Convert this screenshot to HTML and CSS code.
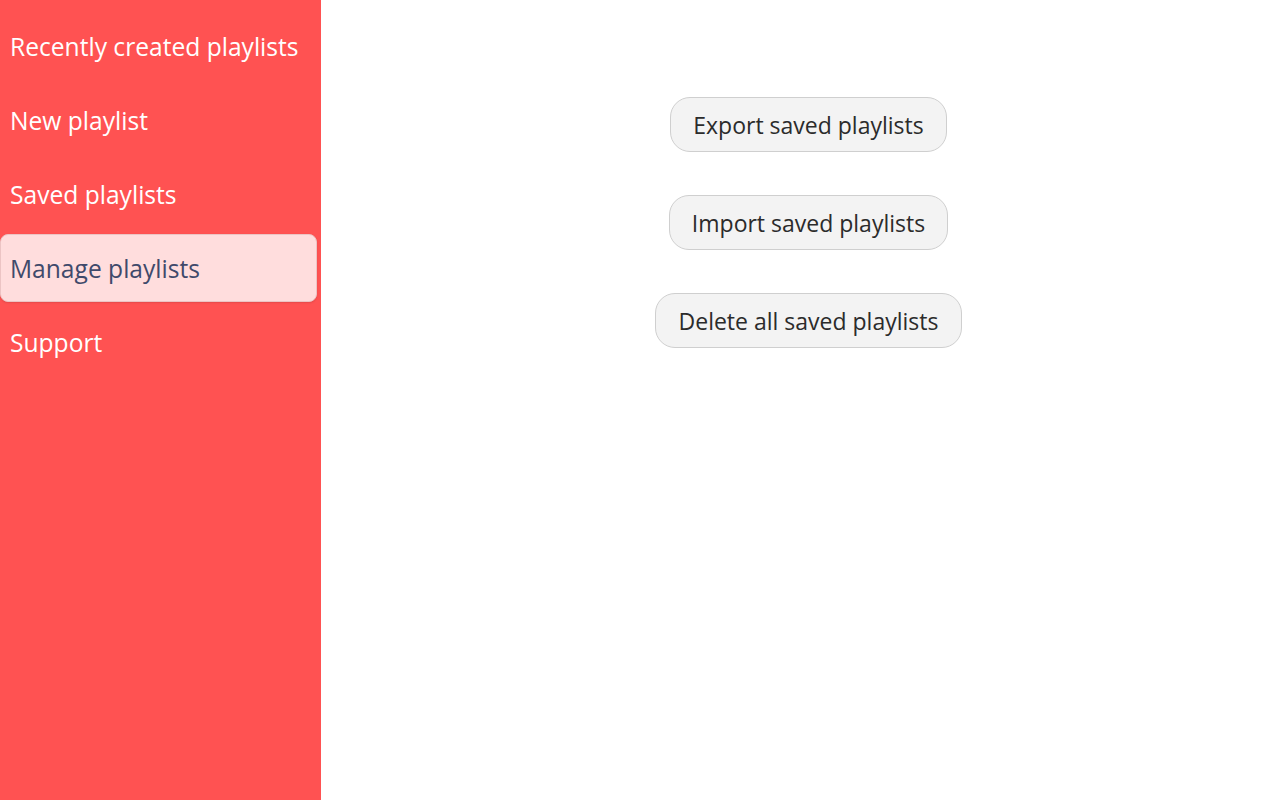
FILE: index.html
```html
<!DOCTYPE html>
<html lang="en">
<head>
<meta charset="utf-8">
<title>Manage playlists</title>
<link rel="stylesheet" href="styles.css">
</head>
<body>
<div class="app">
  <nav class="sidebar">
    <a class="nav-item" href="#">Recently created playlists</a>
    <a class="nav-item" href="#">New playlist</a>
    <a class="nav-item" href="#">Saved playlists</a>
    <a class="nav-item active" href="#">Manage playlists</a>
    <a class="nav-item" href="#">Support</a>
  </nav>
  <main class="main">
    <button class="btn">Export saved playlists</button>
    <button class="btn">Import saved playlists</button>
    <button class="btn">Delete all saved playlists</button>
  </main>
</div>
</body>
</html>
```

FILE: styles.css
```css
* { box-sizing: border-box; }
html, body { margin: 0; padding: 0; height: 100%; }
body { font-family: "Open Sans", "Noto Sans", sans-serif; background: #fff; }
.app { display: flex; height: 800px; }
.sidebar {
  width: 321px;
  flex: none;
  background: #ff5252;
  display: flex;
  flex-direction: column;
  gap: 6px;
  padding: 12px 4px 0 0;
}
.nav-item {
  display: flex;
  align-items: center;
  height: 68px;
  padding: 1px 9px 0;
  font-size: 24.6px;
  color: #fff;
  text-decoration: none;
  border-radius: 8px;
  border: 1px solid transparent;
  white-space: nowrap;
}
.nav-item.active {
  background: #ffdddd;
  color: #3f4a6b;
  border-color: #ecc4c4;
  box-shadow: 0 1px 2px rgba(0,0,0,0.1);
}
.main {
  flex: 1;
  display: flex;
  flex-direction: column;
  align-items: center;
  gap: 43px;
  padding: 97px 0 0 16px;
}
.btn {
  font-family: inherit;
  font-size: 23px;
  color: #2b2b2b;
  background: #f3f3f3;
  border: 1px solid #cfcfcf;
  border-radius: 20px;
  height: 55px;
  padding: 0 22px;
}
.btn:last-child { padding: 0 23px; }
```
